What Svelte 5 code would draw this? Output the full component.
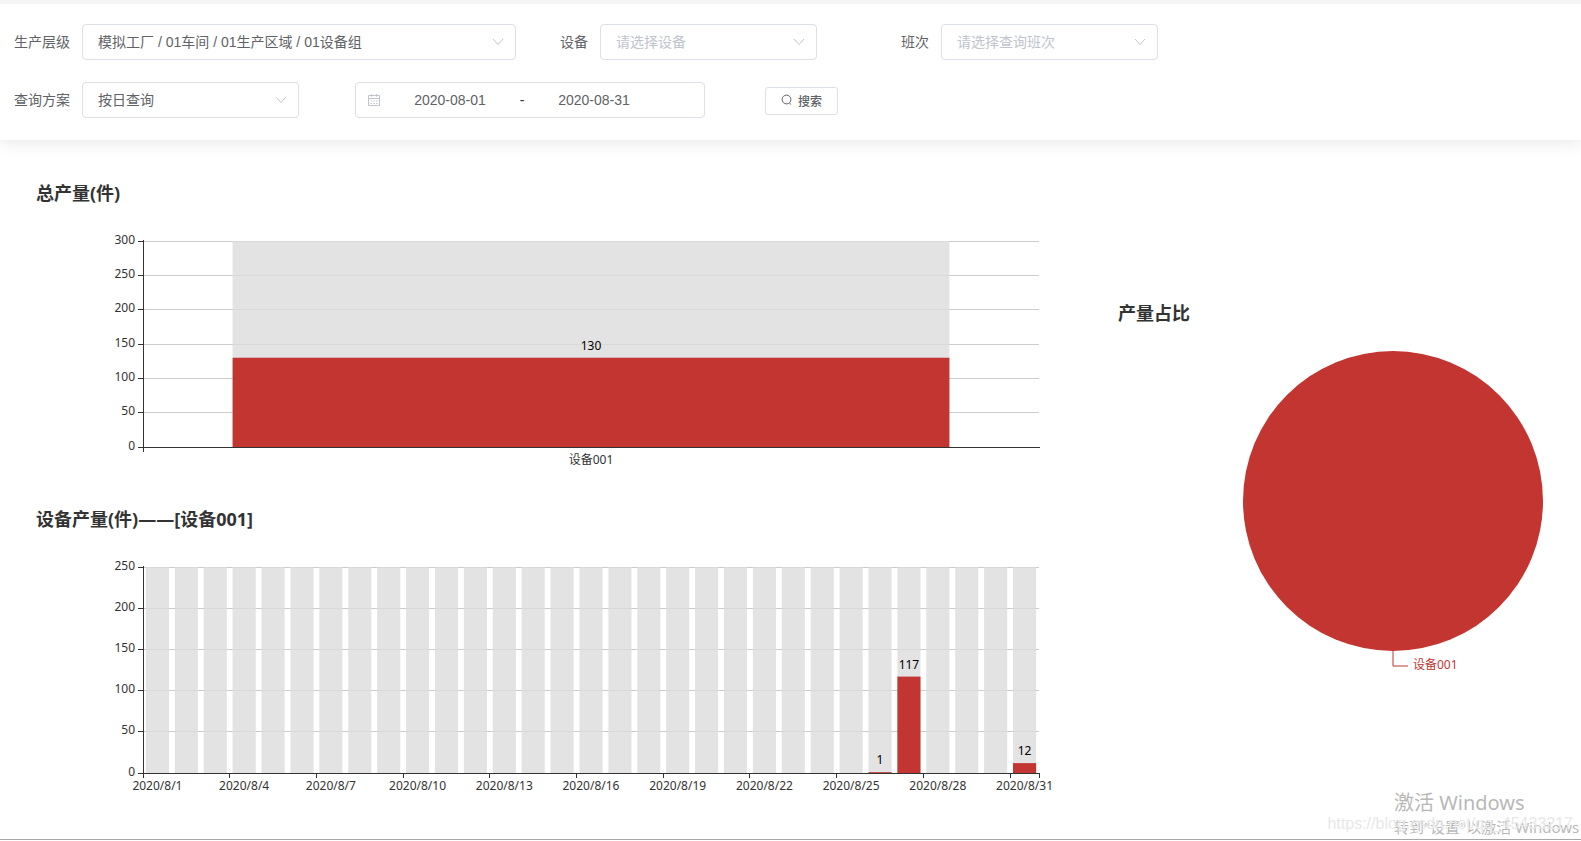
<script>
  const devices = ["设备001"]
  const shifts = ["早班", "晚班"]

  const plotLeft = 112
  const plotRight = 74
  const plotTop = 34
  const plotHeight = 206
  const barRatio = 0.8

  let plan = "day"
  let device = ""
  let shift = ""
  let start = "2020-08-01"
  let end = "2020-08-31"

  let chartWidth = 1082
  let pieWidth = 468

  const daily = { 26: 1, 27: 117, 31: 12 }
  const days = []
  for (let d = 1; d <= 31; d++) {
    days.push({ name: "2020/8/" + d, value: daily[d] || 0 })
  }

  const charts = [
    { title: "总产量(件)", max: 300, every: 1, endTick: false, items: [{ name: "设备001", value: 130 }] },
    { title: "设备产量(件)——[设备001]", max: 250, every: 3, endTick: true, items: days },
  ]

  $: plotWidth = chartWidth - plotLeft - plotRight
  $: pieX = Math.floor(pieWidth * 0.6)

  function ticks(max) {
    let list = []
    for (let v = 0; v <= max; v += 50) list.push(v)
    return list
  }

  function yPos(value, max) {
    return plotTop + plotHeight * (1 - value / max)
  }

  // keep 1px lines on whole pixels
  function crisp(n) {
    return Math.floor(n + 0.01) + 0.5
  }
</script>

<div class="page">
  <form class="search" on:submit|preventDefault>
    <div class="row">
      <label for="level">生产层级</label>
      <div class="select wide">
        <select id="level">
          <option>模拟工厂 / 01车间 / 01生产区域 / 01设备组</option>
        </select>
        <svg class="arrow" viewBox="0 0 12 8"><path d="M1 1L6 6.5L11 1" /></svg>
      </div>
      <label class="device-label" for="device">设备</label>
      <div class="select">
        <select id="device" class:empty={device === ""} bind:value={device}>
          <option value="">请选择设备</option>
          {#each devices as d}
            <option value={d}>{d}</option>
          {/each}
        </select>
        <svg class="arrow" viewBox="0 0 12 8"><path d="M1 1L6 6.5L11 1" /></svg>
      </div>
      <label class="shift-label" for="shift">班次</label>
      <div class="select">
        <select id="shift" class:empty={shift === ""} bind:value={shift}>
          <option value="">请选择查询班次</option>
          {#each shifts as s}
            <option value={s}>{s}</option>
          {/each}
        </select>
        <svg class="arrow" viewBox="0 0 12 8"><path d="M1 1L6 6.5L11 1" /></svg>
      </div>
    </div>

    <div class="row">
      <label for="plan">查询方案</label>
      <div class="select">
        <select id="plan" bind:value={plan}>
          <option value="day">按日查询</option>
          <option value="month">按月查询</option>
        </select>
        <svg class="arrow" viewBox="0 0 12 8"><path d="M1 1L6 6.5L11 1" /></svg>
      </div>
      <div class="range">
        <svg class="calendar" viewBox="0 0 14 14">
          <path d="M1.5 2.5H12.5V12.5H1.5ZM1.5 5.5H12.5M4.5 1V3.5M9.5 1V3.5" />
          <path d="M3.5 8H5M6.3 8H7.8M9.1 8H10.6M3.5 10.5H5M6.3 10.5H7.8M9.1 10.5H10.6" />
        </svg>
        <input type="text" aria-label="开始日期" bind:value={start} />
        <span>-</span>
        <input type="text" aria-label="结束日期" bind:value={end} />
      </div>
      <button type="submit">
        <svg viewBox="0 0 12 12"><circle cx="5.5" cy="5.5" r="4.4" /><path d="M8.4 8.9L10.2 10.6" /></svg>
        <span>搜索</span>
      </button>
    </div>
  </form>

  <main>
    <div class="bars" bind:clientWidth={chartWidth}>
      {#each charts as chart}
        {@const band = plotWidth / chart.items.length}
        {@const barWidth = band * barRatio}
        <section>
          <h2>{chart.title}</h2>
          <svg class="chart" width={chartWidth} height="300">
            {#each ticks(chart.max) as t}
              {@const y = crisp(yPos(t, chart.max))}
              {#if t > 0}
                <line class="grid" x1={plotLeft} x2={plotLeft + plotWidth} y1={y} y2={y} />
              {/if}
              <text class="label" x={plotLeft - 8} y={y + 2} text-anchor="end">{t}</text>
            {/each}

            {#each chart.items as item, i}
              {@const x = plotLeft + band * i + (band - barWidth) / 2}
              {@const y = yPos(item.value, chart.max)}
              <rect class="track" {x} y={plotTop} width={barWidth} height={plotHeight} />
              {#if item.value > 0}
                <rect class="bar" {x} {y} width={barWidth} height={plotTop + plotHeight - y} />
                <text class="value" x={x + barWidth / 2} y={y - 8} text-anchor="middle">{item.value}</text>
              {/if}
              {#if i % chart.every === 0}
                <line class="axis" x1={crisp(plotLeft + band * i)} x2={crisp(plotLeft + band * i)} y1={plotTop + plotHeight} y2={plotTop + plotHeight + 5} />
                <text class="label" x={x + barWidth / 2} y={plotTop + plotHeight + 17} text-anchor="middle">{item.name}</text>
              {/if}
            {/each}

            {#each ticks(chart.max) as t}
              {@const y = crisp(yPos(t, chart.max))}
              <line class="axis" x1={plotLeft - 5} x2={plotLeft} y1={y} y2={y} />
            {/each}
            <line class="axis" x1={plotLeft + 0.5} x2={plotLeft + 0.5} y1={plotTop - 1} y2={plotTop + plotHeight + 1} />
            <line class="axis" x1={plotLeft} x2={plotLeft + plotWidth + 1} y1={plotTop + plotHeight + 0.5} y2={plotTop + plotHeight + 0.5} />
            {#if chart.endTick}
              <line class="axis" x1={plotLeft + plotWidth + 0.5} x2={plotLeft + plotWidth + 0.5} y1={plotTop + plotHeight} y2={plotTop + plotHeight + 5} />
            {/if}
          </svg>
        </section>
      {/each}
    </div>

    <section class="pie" bind:clientWidth={pieWidth}>
      <h2>产量占比</h2>
      <svg class="chart" width={pieWidth} height="374">
        <circle class="bar" cx={pieX} cy="174" r="150" />
        <polyline class="leader" points="{pieX},324 {pieX},339 {pieX + 15},339" />
        <text class="pie-label" x={pieX + 20} y="342">设备001</text>
      </svg>
    </section>
  </main>

  <div class="activate">
    <p class="link">https://blog.csdn.net/qq_45433217</p>
    <p class="big">激活 Windows</p>
    <p class="small">转到"设置"以激活 Windows</p>
  </div>
</div>

<style>
  :global(body) {
    margin: 0;
    background: #fff;
  }

  .page {
    position: relative;
    box-sizing: border-box;
    min-height: calc(100vh - 1px);
    overflow: hidden;
    border-bottom: 1px solid #a8a8a8;
    font-family: "Noto Sans", "Noto Sans CJK SC", sans-serif;
  }

  .search {
    box-sizing: border-box;
    display: flex;
    flex-direction: column;
    gap: 22px;
    padding: 20px 14px 22px;
    border-top: 4px solid #f5f5f5;
    box-shadow: 0 2px 16px rgba(0, 0, 30, 0.1);
    font-family: "Liberation Sans", "Noto Sans CJK SC", sans-serif;
    font-size: 14px;
    color: #606266;
  }

  .row {
    display: flex;
    align-items: center;
    height: 36px;
  }

  label {
    padding: 0 12px 2px 0;
    white-space: nowrap;
  }

  .device-label {
    margin-left: 44px;
  }

  .shift-label {
    margin-left: 84px;
  }

  .select {
    position: relative;
    width: 217px;
  }

  .select.wide {
    width: 434px;
  }

  select {
    appearance: none;
    box-sizing: border-box;
    display: block;
    width: 100%;
    height: 36px;
    padding: 0 30px 0 15px;
    border: 1px solid #dcdfe6;
    border-radius: 4px;
    background: #fff;
    color: #606266;
    font: inherit;
  }

  select.empty {
    color: #c0c4cc;
  }

  .arrow {
    position: absolute;
    top: 14px;
    right: 12px;
    width: 12px;
    height: 8px;
    pointer-events: none;
  }

  .arrow path,
  .calendar path {
    fill: none;
    stroke: #c0c4cc;
  }

  .range {
    box-sizing: border-box;
    display: flex;
    align-items: center;
    width: 350px;
    height: 36px;
    margin-left: 56px;
    padding: 0 11px;
    border: 1px solid #dcdfe6;
    border-radius: 4px;
  }

  .calendar {
    width: 14px;
    height: 14px;
    margin-right: 5px;
  }

  .range input {
    box-sizing: border-box;
    width: 128px;
    padding: 0;
    border: 0;
    outline: 0;
    background: transparent;
    color: #606266;
    font: inherit;
    text-align: center;
  }

  .range span {
    width: 16px;
    color: #303133;
    text-align: center;
  }

  button {
    display: flex;
    align-items: center;
    gap: 5px;
    box-sizing: border-box;
    height: 28px;
    margin: 2px 0 0 60px;
    padding: 0 15px 2px;
    border: 1px solid #dcdfe6;
    border-radius: 3px;
    background: #fff;
    color: #606266;
    font: inherit;
    font-size: 12px;
    font-weight: 500;
    cursor: pointer;
  }

  button svg {
    width: 12px;
    height: 12px;
    fill: none;
    stroke: #606266;
  }

  main {
    display: grid;
    grid-template-columns: minmax(0, 1fr) 468px;
    padding: 41px 0 0 31px;
  }

  h2 {
    margin: 0;
    padding: 0 0 2px 5px;
    color: #333;
    font-size: 18px;
    font-weight: bold;
    line-height: 24px;
  }

  .chart {
    display: block;
    font-size: 12px;
  }

  .grid {
    stroke: #ccc;
    shape-rendering: crispEdges;
  }

  .axis {
    stroke: #333;
    shape-rendering: crispEdges;
  }

  .track {
    fill: rgba(220, 220, 220, 0.8);
  }

  .bar {
    fill: #c23531;
  }

  .label {
    fill: #333;
  }

  .value {
    fill: #000;
  }

  .pie {
    margin-top: 120px;
  }

  .leader {
    fill: none;
    stroke: #c23531;
  }

  .pie-label {
    fill: #c23531;
  }

  /* system notice laid over the bottom right corner */
  .activate {
    position: absolute;
    right: 0;
    bottom: 0;
    width: 187px;
    color: #b8b8b8;
    white-space: nowrap;
    pointer-events: none;
  }

  .activate p {
    margin: 0;
  }

  .activate .big {
    font-size: 20px;
    line-height: 24px;
  }

  .activate .small {
    font-size: 15px;
    line-height: 24px;
  }

  .activate .link {
    position: absolute;
    right: 8px;
    bottom: 5px;
    color: #e8e8e8;
    font-family: "Liberation Sans", sans-serif;
    font-size: 16px;
    line-height: 20px;
  }
</style>
